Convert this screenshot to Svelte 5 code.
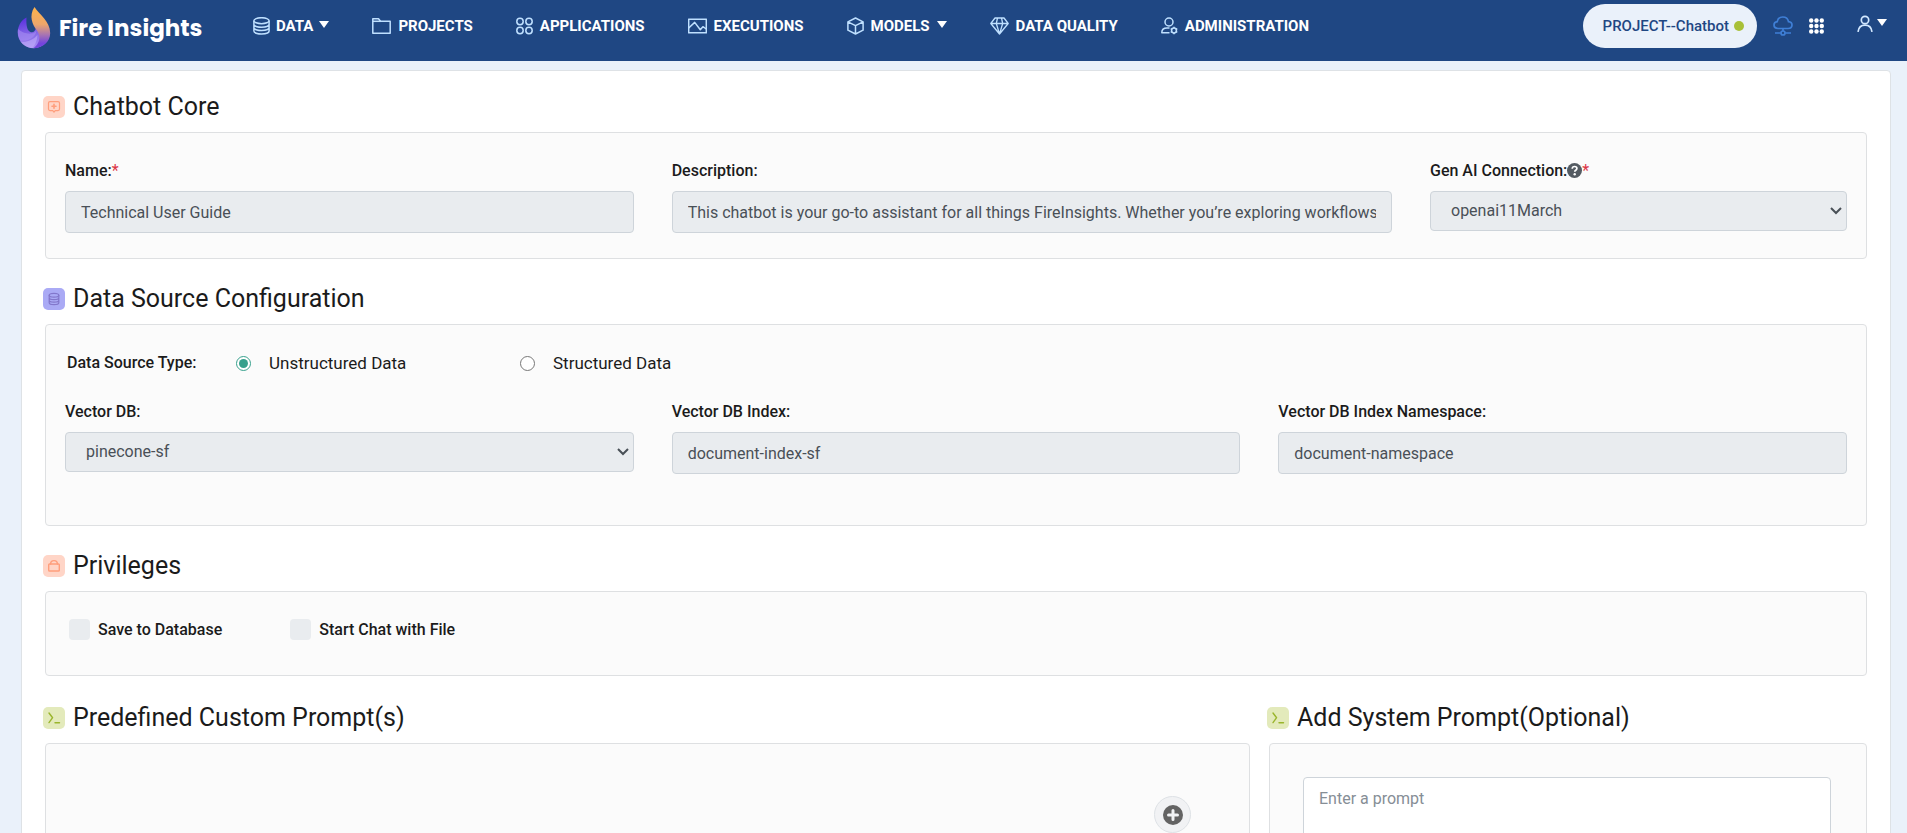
<script>
  const nav = [
    { label: 'DATA', icon: 'db', caret: true },
    { label: 'PROJECTS', icon: 'folder' },
    { label: 'APPLICATIONS', icon: 'apps' },
    { label: 'EXECUTIONS', icon: 'chart' },
    { label: 'MODELS', icon: 'cube', caret: true },
    { label: 'DATA QUALITY', icon: 'gem' },
    { label: 'ADMINISTRATION', icon: 'admin' }
  ];
  let source = $state('unstructured');
</script>

{#snippet caret()}
  <svg class="caret" width="10" height="7" viewBox="0 0 10 7" aria-hidden="true"><path d="M0 0h10L5 7z" fill="#fff" /></svg>
{/snippet}

{#snippet heading(icon, text)}
  <h2>
    <span class="badge {icon}">
      <svg width="14" height="14" viewBox="0 0 14 14" fill="none" stroke="currentColor" stroke-width="1.2" stroke-linecap="round" stroke-linejoin="round" aria-hidden="true">
        {#if icon === 'chat'}
          <path d="M3 1.600h8q1.500 0 1.500 1.500v6q0 1.500-1.500 1.500H8.200L7 12.200l-1.200-1.600H3q-1.500 0-1.500-1.500v-6q0-1.500 1.500-1.500z" />
          <path d="M7 4.200v4M5 6.200h4" stroke-width="1.600" />
        {:else if icon === 'store'}
          <ellipse cx="7" cy="3.300" rx="4.800" ry="1.900" />
          <path d="M2.200 3.300v7.400c0 1 2 1.900 4.800 1.900s4.800-.9 4.800-1.900V3.300M2.200 5.800c0 1 2 1.900 4.800 1.900s4.800-.9 4.800-1.900M2.200 8.300c0 1 2 1.900 4.800 1.900s4.800-.9 4.800-1.900" />
        {:else if icon === 'lock'}
          <rect x="1.700" y="5" width="10.600" height="7" rx="0.800" stroke-width="1.400" />
          <path d="M3.600 5c0-2.600 1.300-3.400 3.400-3.400s3.400.8 3.400 3.400" stroke-width="1.400" />
        {:else}
          <path d="M2 2l3.600 4.700L2 11.600M8 11.800h4.500" stroke-width="1.400" />
        {/if}
      </svg>
    </span>
    {text}
  </h2>
{/snippet}

<header>
  <a class="brand" href="#home">
    <svg width="34" height="42" viewBox="0 0 34 42" aria-hidden="true">
      <defs>
        <linearGradient id="flame" x1="0" y1="0" x2="0" y2="1">
          <stop offset="0" stop-color="#ffb34a" />
          <stop offset=".42" stop-color="#eda66b" />
          <stop offset=".68" stop-color="#a673b4" />
          <stop offset=".88" stop-color="#7444dc" />
        </linearGradient>
        <linearGradient id="base" x1=".3" y1="0" x2=".5" y2="1">
          <stop offset="0" stop-color="#5a2fe0" />
          <stop offset=".5" stop-color="#8163e6" />
          <stop offset="1" stop-color="#a78df2" />
        </linearGradient>
      </defs>
      <path d="M9.500 10.500C3.500 13.500.7 20 .7 25.500.7 34.500 8 41.200 16.500 41.200c5 0 9-2.200 11.500-5.200L19 20.500c-.5 3.500-2.600 5.200-5 4.700C10 24.300 9 18 9.500 10.500z" fill="url(#base)" />
      <path d="M1 22c4 3.500 8 5 13 4.600 3-.3 4.800-1.600 5.500-3.600-.3 5-4 8.500-8.500 10-3.500 1-5.800 1-7.700.5C1.300 30.500.5 26 1 22z" fill="#a68ef2" opacity=".6" />
      <path d="M17.500 0C22 7 33.200 14.500 33.200 26c0 9-7.700 15.200-16.700 15.200 6.500-4.700 7.500-12.200 3.500-17.700C15.500 18 11.500 9 17.500 0z" fill="url(#flame)" />
      <path d="M3.500 34.500c6 1.200 12.500-1.300 17-6.500-.3 6-2.700 10.500-5.200 13.100C10.500 40.800 6.300 38.500 3.500 34.500z" fill="#c4b2fa" opacity=".55" />
    </svg>
    <span>Fire Insights</span>
  </a>
  <nav>
    {#each nav as item}
      <a href="#{item.icon}" class:tight={item.icon === 'db'}>
        <svg width={['folder', 'chart', 'gem'].includes(item.icon) ? 19 : 17} height="18" viewBox={['folder', 'chart', 'gem'].includes(item.icon) ? '0 0 19 18' : '0 0 17 18'} fill="none" stroke="#bfe0ff" stroke-width="1.500" stroke-linejoin="round" aria-hidden="true">
          {#if item.icon === 'db'}
            <ellipse cx="8.500" cy="3.700" rx="7.600" ry="3" />
            <path d="M.9 3.700v10.300c0 1.700 3.400 3 7.600 3s7.600-1.300 7.600-3V3.700M.9 7.200c0 1.700 3.400 3 7.600 3s7.600-1.300 7.600-3M.9 10.600c0 1.700 3.400 3 7.600 3s7.600-1.300 7.600-3" />
          {:else if item.icon === 'folder'}
            <path d="M.8 16.300V1.700h5.700l2 2.600h9.700v12z" />
            <path d="M.8 4.300h8" />
          {:else if item.icon === 'apps'}
            <circle cx="4" cy="4.500" r="3.200" /><circle cx="13" cy="4.500" r="3.200" />
            <circle cx="4" cy="13.500" r="3.200" /><circle cx="13" cy="13.500" r="3.200" />
          {:else if item.icon === 'chart'}
            <path d="M.7 2.200h17.600v13.600H.7z" />
            <path d="M.7 11l6-5.600 5.600 7.300 2.600-3 3.400 2.300" />
          {:else if item.icon === 'cube'}
            <path d="M8.500 1l7.600 3.800v8.400L8.500 17 .9 13.200V4.800zM.9 4.800l7.600 3.900 7.600-3.900M8.500 8.700V17" />
          {:else if item.icon === 'gem'}
            <path d="M5 1h9l4.200 5.500L9.500 17 .8 6.500zM.8 6.500h17.400M6.300 6.500L9.500 17l3.200-10.500M7.500 1L6.300 6.500M11.500 1l1.200 5.500" stroke-width="1.300" />
          {:else}
            <circle cx="8" cy="5" r="4" />
            <path d="M8.500 15.700H.8c0-3 2.200-4.700 5.200-4.700h2.500" />
            <circle cx="13" cy="13.500" r="2.400" />
            <path d="M13 9.700v1.400M13 15.900v1.400M9.700 11.600l1.200.7M15.100 14.700l1.200.7M9.700 15.400l1.200-.7M15.100 12.300l1.200-.7" />
          {/if}
        </svg>
        {item.label}
        {#if item.caret}{@render caret()}{/if}
      </a>
    {/each}
  </nav>
  <div class="tools">
    <button class="project">PROJECT--Chatbot <i></i></button>
    <button class="plain" aria-label="Cloud status">
      <svg width="20" height="20" viewBox="0 0 20 20" fill="none" stroke="#3f7fd6" stroke-width="1.700">
        <path d="M5 12.500C2.500 12.500 1 11 1 9c0-1.800 1.300-3.200 3.200-3.400C4.700 3 6.800 1 9.800 1c3 0 5.200 2 5.700 4.600 2 .2 3.500 1.600 3.500 3.500 0 2-1.500 3.400-4 3.400zM10 12.500V15M2 17h5.800M12.200 17H18" />
        <circle cx="10" cy="17" r="2" />
      </svg>
    </button>
    <button class="plain" aria-label="Apps">
      <svg width="15" height="16" viewBox="0 0 15 16" fill="#fff">
        {#each [2.5, 8, 13.5] as y}{#each [2.2, 7.5, 12.8] as x}<circle cx={x} cy={y} r="2.200" />{/each}{/each}
      </svg>
    </button>
    <button class="plain user" aria-label="Account">
      <svg width="16" height="18" viewBox="0 0 16 18" fill="none" stroke="#d3e8ff" stroke-width="1.700">
        <circle cx="8" cy="5" r="3.700" />
        <path d="M1 16.800c.6-4.500 3.300-6.700 7-6.700s6.400 2.200 7 6.700" />
      </svg>
      {@render caret()}
    </button>
  </div>
</header>

<main>
  <section>
    {@render heading('chat', 'Chatbot Core')}
    <div class="card core">
      <div class="field">
        <label for="name">Name:<em>*</em></label>
        <input id="name" type="text" value="Technical User Guide" disabled />
      </div>
      <div class="field">
        <label for="description">Description:</label>
        <input id="description" type="text" value="This chatbot is your go-to assistant for all things FireInsights. Whether you’re exploring workflows, datasets or models, ask away." disabled />
      </div>
      <div class="field">
        <label for="connection">Gen AI Connection:<svg class="help" width="15" height="15" viewBox="0 0 15 15" aria-hidden="true"><circle cx="7.500" cy="7.500" r="7.500" fill="#545b62" /><path d="M5.200 5.700c.1-1.400 1-2.200 2.400-2.200 1.300 0 2.300.8 2.300 2 0 1.700-2.200 1.700-2.200 3.300" fill="none" stroke="#fff" stroke-width="1.700" /><circle cx="7.700" cy="11.200" r="1.200" fill="#fff" /></svg><em>*</em></label>
        <select id="connection" disabled><option>openai11March</option></select>
      </div>
    </div>
  </section>

  <section>
    {@render heading('store', 'Data Source Configuration')}
    <div class="card data">
      <div class="types" role="radiogroup" aria-labelledby="type-label">
        <span id="type-label">Data Source Type:</span>
        <label><input type="radio" name="source" value="unstructured" bind:group={source} />Unstructured Data</label>
        <label><input type="radio" name="source" value="structured" bind:group={source} />Structured Data</label>
      </div>
      <div class="thirds">
        <div class="field">
          <label for="vector">Vector DB:</label>
          <select id="vector" disabled><option>pinecone-sf</option></select>
        </div>
        <div class="field">
          <label for="index">Vector DB Index:</label>
          <input id="index" type="text" value="document-index-sf" disabled />
        </div>
        <div class="field">
          <label for="namespace">Vector DB Index Namespace:</label>
          <input id="namespace" type="text" value="document-namespace" disabled />
        </div>
      </div>
    </div>
  </section>

  <section>
    {@render heading('lock', 'Privileges')}
    <div class="card privileges">
      <label><input type="checkbox" disabled />Save to Database</label>
      <label><input type="checkbox" disabled />Start Chat with File</label>
    </div>
  </section>

  <div class="prompts">
    <section>
      {@render heading('prompt', 'Predefined Custom Prompt(s)')}
      <div class="card custom">
        <button class="add" aria-label="Add prompt">
          <svg width="20" height="20" viewBox="0 0 20 20"><circle cx="10" cy="10" r="10" fill="#636363" /><path d="M10 5.500v9M5.500 10h9" stroke="#f1f2f4" stroke-width="3" stroke-linecap="round" /></svg>
        </button>
      </div>
    </section>
    <section>
      {@render heading('prompt', 'Add System Prompt(Optional)')}
      <div class="card system">
        <textarea aria-label="System prompt" placeholder="Enter a prompt"></textarea>
      </div>
    </section>
  </div>
</main>

<style>
  :global(html) {
    overflow: hidden;
  }
  :global(body) {
    background: #eaf1fa;
    color: #1b1b1b;
    font: 16px/24px Roboto, sans-serif;
  }
  :global(*) {
    box-sizing: border-box;
  }
  header {
    display: flex;
    align-items: flex-start;
    height: 61px;
    padding: 0 20px 0 17px;
    background: #1f4783;
  }
  a {
    color: #fff;
    text-decoration: none;
  }
  .brand {
    display: flex;
    align-items: center;
    gap: 8px;
    width: 236px;
    padding-top: 7px;
    font: 700 23px/42px Poppins, Inter, sans-serif;
    white-space: nowrap;
  }
  nav {
    display: flex;
    gap: 43px;
    padding-top: 14px;
  }
  nav a {
    display: flex;
    align-items: center;
    gap: 7px;
    font-size: 15px;
    font-weight: 700;
    white-space: nowrap;
  }
  nav a.tight {
    gap: 6px;
  }
  .caret {
    margin-bottom: 4px;
  }
  .tools {
    display: flex;
    align-items: center;
    gap: 16px;
    margin-left: auto;
    padding-top: 4px;
  }
  button {
    font-family: inherit;
    cursor: pointer;
  }
  .project {
    display: flex;
    align-items: center;
    gap: 5px;
    height: 44px;
    padding: 0 13px 0 20px;
    border: 0;
    border-radius: 22px;
    background: #eaf1fa;
    color: #1f4783;
    font-size: 15px;
    font-weight: 500;
    white-space: nowrap;
  }
  .project i {
    width: 10px;
    height: 10px;
    border-radius: 50%;
    background: #a8c038;
  }
  .plain {
    display: flex;
    align-items: center;
    gap: 4px;
    padding: 0;
    border: 0;
    background: none;
  }
  .user {
    margin: 0 0 4px 17px;
  }
  main {
    margin: 9px 16px 0 21px;
    padding: 21px 23px 32px;
    border: 1px solid #dee2e6;
    border-radius: 4px;
    background: #fff;
  }
  section {
    margin-bottom: 25px;
  }
  h2 {
    display: flex;
    align-items: center;
    gap: 8px;
    margin: 0 0 10px -2px;
    font-size: 25px;
    font-weight: 400;
    line-height: 30px;
  }
  .badge {
    display: grid;
    place-items: center;
    width: 22px;
    height: 22px;
    border-radius: 5px;
  }
  .chat,
  .lock {
    background: #ffd5c7;
    color: #ff9e7c;
  }
  .store {
    background: #aaaaf5;
    color: #8277cb;
  }
  .prompt {
    background: #e3eabb;
    color: #9ab52c;
  }
  .card {
    border: 1px solid #dee0e2;
    border-radius: 4px;
    background: #fbfbfb;
  }
  .core {
    display: grid;
    grid-template-columns: 4fr 5fr 3fr;
    padding: 26px 0 25px;
  }
  .data {
    padding: 26px 0 51px;
  }
  .thirds {
    display: grid;
    grid-template-columns: repeat(3, 1fr);
  }
  .field {
    display: flex;
    flex-direction: column;
    gap: 8px;
    min-width: 0;
    padding: 0 19px;
  }
  .field label,
  #type-label,
  .privileges label {
    font-weight: 500;
  }
  em {
    color: #dc3545;
    font-style: normal;
    font-weight: 400;
  }
  .help {
    vertical-align: -2px;
  }
  .field input,
  select {
    width: 100%;
    height: 42px;
    padding: 0 15px;
    border: 1px solid #ced4da;
    border-radius: 4px;
    background: #e9ecef;
    color: #495057;
    font: inherit;
    opacity: 1;
  }
  select {
    height: 40px;
    padding: 0 30px 0 20px;
    appearance: none;
    background: #e9ecef url("data:image/svg+xml,%3Csvg xmlns='http://www.w3.org/2000/svg' width='12' height='8' fill='none' stroke='%23495057' stroke-width='2'%3E%3Cpath d='M1 1l5 5 5-5'/%3E%3C/svg%3E") no-repeat right 4px center;
  }
  .types {
    display: flex;
    align-items: center;
    margin-bottom: 25px;
    padding-left: 21px;
  }
  #type-label {
    width: 169px;
  }
  .types label {
    display: flex;
    align-items: center;
    gap: 18px;
    width: 284px;
    font-size: 17px;
  }
  .types input {
    width: 15px;
    height: 15px;
    margin: 0;
    accent-color: #37a08c;
  }
  .privileges {
    display: flex;
    gap: 68px;
    padding: 27px 23px 35px;
  }
  .privileges label {
    display: flex;
    align-items: center;
    gap: 8px;
    line-height: 21px;
  }
  .privileges input {
    width: 21px;
    height: 21px;
    margin: 0;
    border-radius: 4px;
    background: #e9ecef;
    appearance: none;
  }
  .prompts {
    display: grid;
    grid-template-columns: minmax(0, 1205fr) minmax(0, 598fr);
    gap: 19px;
    padding-top: 2px;
  }
  .custom {
    display: flex;
    justify-content: flex-end;
    height: 200px;
    padding: 52px 58px;
  }
  .add {
    display: grid;
    place-items: center;
    width: 37px;
    height: 37px;
    padding: 0;
    border: 1px solid #dee2e6;
    border-radius: 50%;
    background: #f1f2f4;
  }
  .system {
    height: 200px;
    padding: 33px 35px 33px 33px;
  }
  textarea {
    display: block;
    width: 100%;
    height: 130px;
    padding: 9px 15px;
    border: 1px solid #ced4da;
    border-radius: 4px;
    font: inherit;
    resize: none;
  }
  textarea::placeholder {
    color: #868e96;
  }
</style>
